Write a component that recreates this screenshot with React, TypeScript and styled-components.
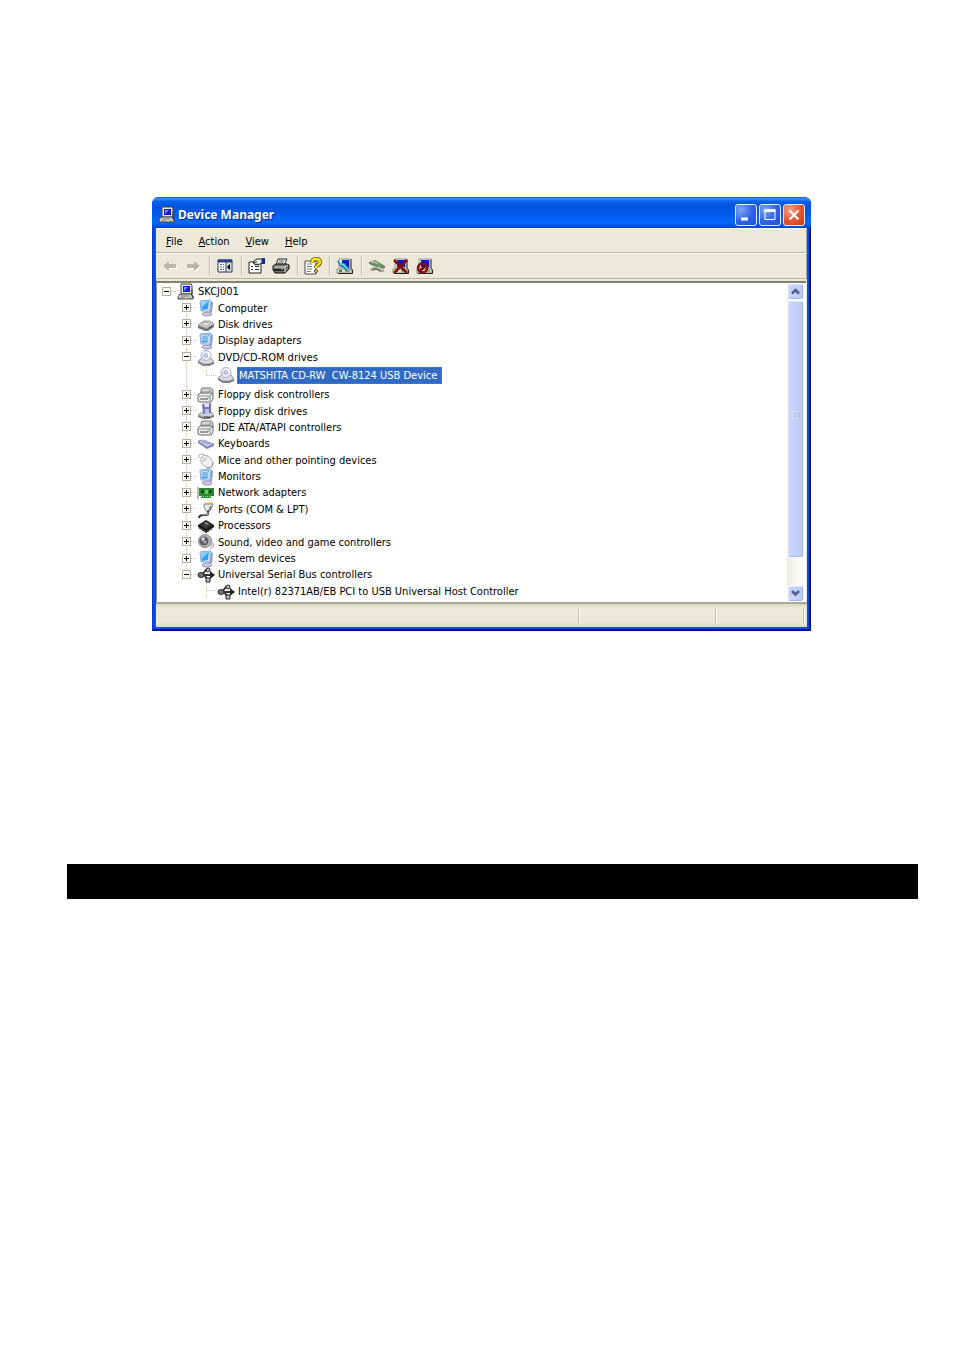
import React from "react";
import styled, { createGlobalStyle, css } from "styled-components";

const GlobalStyle = createGlobalStyle`
  * { box-sizing: border-box; }
  body { margin: 0; background: #fff; }
`;

const uiFont = `"DejaVu Sans Condensed", "Noto Sans", sans-serif`;

const Page = styled.main`
  padding: 197px 36px 0 67px;
  font-family: Tahoma, ${uiFont};
  font-size: 11px;
  line-height: 14px;
  color: #000;
`;

const Window = styled.section`
  margin: 0 107px 0 85px;
  padding: 0 4px 4px;
  border-radius: 7px 7px 0 0;
  background: #0a50e0;
  box-shadow: inset 1px 0 #0a35cf, inset -2px -2px #00138c;
`;

const TitleBar = styled.header`
  display: flex;
  align-items: center;
  gap: 2px;
  height: 31px;
  margin: 0 -4px;
  padding: 4px 6px 0 6px;
  border-radius: 7px 7px 0 0;
  background: linear-gradient(#0a5ae0 0, #3a90fb 2px, #0a62ee 4px, #0055e0 9px, #0058e8 16px, #0566fd 24px, #0566fd 26px, #0044c8 31px);
`;

const Title = styled.h1`
  flex: 1;
  margin: 0;
  font: bold 12px/16px "Trebuchet MS", "Noto Sans", sans-serif;
  color: #fff;
  text-shadow: 1px 1px #0a2a80;
`;

const Captions = styled.div`
  display: flex;
  gap: 2px;
`;

const CaptionButton = styled.button<{ $close?: boolean }>`
  display: grid;
  place-items: center;
  width: 22px;
  height: 22px;
  padding: 0;
  border: 1px solid #e4ecfc;
  border-radius: 3px;
  background: ${(p) =>
    p.$close
      ? "radial-gradient(circle at 30% 25%, #f0a088, #e2552e 55%, #c83a12)"
      : "radial-gradient(circle at 25% 25%, #7da4f4, #2f62e0 55%, #1f4fd0)"};
`;

const bar = css`
  display: flex;
  align-items: center;
  height: 25px;
  background: #ece9d8;
  border: solid;
  border-width: 1px 1px 1px 0;
  border-color: #fff #aca899 #b8b4a2 #fff;
`;

const MenuBar = styled.nav`
  ${bar}
  padding: 2px 0 0 2px;
`;

const MenuButton = styled.button`
  padding: 0 8px;
  border: 0;
  background: none;
  font: inherit;
  color: inherit;
  &::first-letter { text-decoration: underline; }
`;

const ToolBar = styled.div`
  ${bar}
  height: 26px;
  padding-left: 1px;
`;

const ToolButton = styled.button`
  display: grid;
  place-items: center;
  width: 24px;
  height: 22px;
  padding: 0;
  border: 0;
  background: none;
`;

const ToolDivider = styled.span`
  width: 8px;
  height: 20px;
  background: linear-gradient(90deg, transparent 4px, #c5c2b2 4px, #c5c2b2 5px, #f8f6ee 5px, #f8f6ee 6px, transparent 6px);
`;

const Client = styled.div`
  display: flex;
  border-top: 2px solid #ece9d8;
  border-left: 1px solid #918f83;
  border-right: 1px solid #ece9d8;
  padding-right: 2px;
  background: #fff;
  box-shadow: inset 0 2px #85826f;
`;

const Tree = styled.ul`
  flex: 1;
  display: grid;
  grid-template-rows: repeat(5, 1fr) 21px repeat(13, 1fr);
  height: 319px;
  margin: 2px 0 0;
  padding: 0 0 3px;
  overflow: hidden;
  list-style: none;
`;

const TreeRow = styled.li`
  display: flex;
  align-items: stretch;
  min-height: 0;
`;

const dots = "#c9c5b8";
const vertical = (size: string) =>
  `repeating-linear-gradient(${dots} 0 1px, transparent 1px 2px) 9px 0 / 1px ${size} no-repeat`;
const horizontal = `repeating-linear-gradient(90deg, ${dots} 0 1px, transparent 1px 2px) 10px 50% / 10px 1px no-repeat`;

type Line = "none" | "through" | "tee" | "elbow" | "stub";

const lines: Record<Line, string> = {
  none: "none",
  through: vertical("100%"),
  tee: `${vertical("100%")}, ${horizontal}`,
  elbow: `${vertical("50%")}, ${horizontal}`,
  stub: horizontal,
};

const Guide = styled.span<{ $line: Line }>`
  display: flex;
  align-items: center;
  width: 20px;
  padding-left: 5px;
  background: ${(p) => lines[p.$line]};
`;

const Toggle = styled.button<{ $open: boolean }>`
  width: 9px;
  height: 9px;
  padding: 0;
  border: 1px solid #b4b09f;
  background:
    linear-gradient(#000, #000) center / 5px 1px no-repeat,
    linear-gradient(#000, #000) center / 1px ${(p) => (p.$open ? 0 : 5)}px no-repeat,
    #fdfcfa;
`;

const NodeIcon = styled.span`
  display: grid;
  place-items: center;
  width: 20px;
  padding-right: 3px;
`;

const Label = styled.span<{ $selected?: boolean }>`
  align-self: center;
  padding: 2px 1px 0;
  line-height: 14px;
  white-space: pre;
  ${(p) =>
    p.$selected &&
    css`
      padding: 2px 5px 1px 2px;
      outline: 1px dotted #7a7a86;
      outline-offset: -1px;
      background: #316ac5;
      color: #fff;
    `}
`;

const ScrollBar = styled.div`
  display: flex;
  flex-direction: column;
  width: 17px;
  margin-top: 2px;
  background: linear-gradient(90deg, #eeede5, #fefefb);
`;

const scrollFace = css`
  display: grid;
  place-items: center;
  padding: 0;
  border: 1px solid #fff;
  border-radius: 3px;
  background: linear-gradient(90deg, #c9d6fd, #bbcbf8);
  box-shadow: inset -1px -1px #9db6ee, inset 1px 1px #d6e0fc;
`;

const ScrollButton = styled.button`
  ${scrollFace}
  height: 17px;
`;

const Thumb = styled.div`
  ${scrollFace}
  height: 258px;
  margin-bottom: auto;
  padding-bottom: 28px;
`;

const StatusBar = styled.footer`
  display: flex;
  height: 25px;
  padding: 4px 3px 2px 0;
  border-top: 2px solid #aca899;
  background: linear-gradient(#d8d5c2, #ece9d8 4px, #ece9d8 18px, #dedbc8);
`;

const StatusCell = styled.span<{ $width?: number }>`
  flex: ${(p) => (p.$width ? `0 0 ${p.$width}px` : "1")};
  border-right: 1px solid #c5c2b2;
  box-shadow: 1px 0 #fbfaf4;
`;

const SectionBand = styled.div`
  height: 35px;
  margin-top: 233px;
  background: #000;
`;

const Svg = ({ children }: { children: React.ReactNode }) => (
  <svg width="18" height="18" viewBox="0 0 18 18" aria-hidden="true">
    {children}
  </svg>
);

const PcIcon = () => (
  <Svg>
    <path d="M4 1h10l1 1v9H5L4 10z" fill="#e4e4ea" stroke="#444" />
    <path d="M6 3h7v6H6z" fill="#1616d8" />
    <path d="M7 4h4L7 8z" fill="#7c8cff" />
    <path d="M3 11h11l2 3v2H1v-2z" fill="#d4d4cc" stroke="#444" />
    <path d="M4 13h8M3 15h5" stroke="#777" />
    <path d="M15 6v6l2 3" fill="none" stroke="#333" />
    <path d="M12 15h2" stroke="#20a040" />
  </Svg>
);

const Monitor = ({ card }: { card?: boolean }) => (
  <Svg>
    <path d="M13 2l3 1-1 10-3 1z" fill="#8f9bcc" />
    <ellipse cx="10" cy="15" rx="5" ry="2" fill="#c9cbe2" stroke="#9698b8" />
    <path d="M3 2l10-1 1 1-1 10-9 0z" fill="#d5e6fa" stroke="#8ba5d0" />
    <path d="M4 3l8-1-1 8-6 1z" fill="#38a0f4" />
    <path d="M4 3l8-1-7 6z" fill="#82d2ff" />
    {card && <path d="M5 4h6v4H5z" fill="#1878c8" stroke="#d4efff" />}
    {card && <path d="M6 6h4" stroke="#fff" />}
  </Svg>
);

const DriveIcon = () => (
  <Svg>
    <path d="M1 9l6-4h6l4 3v3l-6 4H8l-7-3z" fill="#777" />
    <path d="M1 9l6-4h6l4 3-6 4H8z" fill="#d2d2d2" stroke="#999" />
    <ellipse cx="9" cy="8" rx="4" ry="1.5" fill="#efefef" stroke="#aaa" />
    <path d="M12 12l3-2" stroke="#3e3e3e" />
  </Svg>
);

const DiscIcon = () => (
  <Svg>
    <path d="M1 12l4-3h9l3 4v2l-5 2H6l-5-3z" fill="#77777f" />
    <path d="M1 12l4-3h9l3 4-5 2H6z" fill="#dadae0" stroke="#96969e" />
    <circle cx="9" cy="6.500" r="5" fill="#ebebfa" stroke="#b0b0c8" />
    <path d="M9 6.500L12 2.500 13.500 6z" fill="#fff" />
    <path d="M9 6.500L5 9 4.500 6z" fill="#c8c8f0" />
    <circle cx="9" cy="6.500" r="1.500" fill="#fff" stroke="#8a8ad8" />
  </Svg>
);

const ControllerIcon = () => (
  <Svg>
    <path d="M5 2h9l2 2v4l-2 2H4V4z" fill="#d5d5d5" stroke="#777" />
    <path d="M3 7h11l2 1v5l-2 3H3l-2-1V9z" fill="#f0f0f0" stroke="#666" />
    <path d="M2 10h11v5M13 10l2-2M4 6h9" fill="none" stroke="#888" />
    <path d="M3 13h8" stroke="#444" />
    <path d="M10 12h2" stroke="#32b052" />
    <path d="M12 5h2" stroke="#32b052" />
  </Svg>
);

const FloppyIcon = () => (
  <Svg>
    <path d="M1 13l4-3h9l3 3v2l-5 2H6l-5-2z" fill="#77777f" />
    <path d="M1 13l4-3h9l3 3-5 2H6z" fill="#d2d2d6" stroke="#a0a0a8" />
    <path d="M5 2l9-1v10l-8 1z" fill="#7474b8" />
    <path d="M7 2l5-1v4H8z" fill="#e6e6fa" />
    <path d="M8 7h4v5H8z" fill="#c0c0e4" />
    <path d="M7 15h6" stroke="#444" />
  </Svg>
);

const KeyboardIcon = () => (
  <Svg>
    <path d="M1 6l4-1 12 4v2l-7 3-9-6z" fill="#7e7eb4" />
    <path d="M1 6l5-1 11 4-7 3z" fill="#d8d8f4" stroke="#9898ca" />
    <path d="M4 6.500l8 3.500M6 6l8 3.500M6 8l4-2M9 9.500l4-2" stroke="#a5a5d6" />
  </Svg>
);

const MouseIcon = () => (
  <Svg>
    <path d="M2 6q-1-4 3-4l3 1" fill="none" stroke="#aaa" />
    <path d="M4 6q2-4 7-2 5 3 5 7 0 5-5 5-5-1-7-6z" fill="#efefef" stroke="#b4b4b4" />
    <path d="M5 9q4 0 5-6M5 5l4 3" fill="none" stroke="#bbb" />
    <path d="M16 11q0 5-6 5" fill="none" stroke="#888" />
  </Svg>
);

const NetworkIcon = () => (
  <Svg>
    <path d="M2 4h15v8h-3v2H4v-2H2z" fill="#2c8a30" />
    <path d="M1 3v12" stroke="#777" />
    <path d="M4 6h3v3H4zM12 6h3v3h-3z" fill="#0f4c18" />
    <path d="M8 6h3v4H8z" fill="#72c862" />
    <path d="M4 12.500h10" stroke="#dcc246" strokeDasharray="1 1" />
  </Svg>
);

const PortIcon = () => (
  <Svg>
    <path d="M8 1h8v2H8z" fill="#f0ec70" />
    <path d="M7 3h9l-1 3-2 4H9L7 6z" fill="#e9e9e9" stroke="#888" />
    <path d="M14 5l-2 5" stroke="#888" strokeWidth="2" />
    <path d="M11 10v3q0 1-4 1-5 0-5 3" fill="none" stroke="#333" strokeWidth="2" />
    <path d="M11 11v2q-2 1-6 1" fill="none" stroke="#aaa" />
  </Svg>
);

const ChipIcon = () => (
  <Svg>
    <path d="M1 8l8-5 8 5v2l-8 6-8-6z" fill="#161616" />
    <path d="M3 8l6-4 6 4-6 4z" fill="#3a3a3a" />
    <path d="M7 6l2-1 3 2-2 1z" fill="#888" />
    <path d="M2 11l7 4 7-4" fill="none" stroke="#555" strokeWidth="2" strokeDasharray="1 1" />
  </Svg>
);

const SoundIcon = () => (
  <Svg>
    <circle cx="8" cy="8" r="6.500" fill="#b4b4b8" stroke="#888" />
    <circle cx="7" cy="8" r="4.500" fill="#5a5a60" />
    <path d="M4 6q2-3 4-1L6 9z" fill="#ddd" />
    <circle cx="8" cy="9" r="1.500" fill="#aaa" />
    <path d="M15 9q1 3-2 5M17 10q1 4-4 6" fill="none" stroke="#9b9be4" />
  </Svg>
);

const UsbIcon = () => (
  <Svg>
    <path d="M3 9h12M5 9l4-5h2M7 9l4 5h2" fill="none" stroke="#333" strokeWidth="2" />
    <ellipse cx="4" cy="9" rx="3" ry="2.500" fill="#777" stroke="#222" />
    <path d="M13 5l5 4-5 4z" fill="#222" />
    <circle cx="11" cy="4" r="2" fill="#bbb" stroke="#222" />
    <path d="M9 12h4v4H9z" fill="#bbb" stroke="#222" />
  </Svg>
);

const Arrow = ({ back }: { back?: boolean }) => {
  const shape = back ? "M3 9l6-5v3h7v4H9v3z" : "M16 9l-6-5v3H3v4h7v3z";
  return (
    <Svg>
      <path d={shape} fill="#fff" transform="translate(1 1)" />
      <path d={shape} fill="#b9b6a8" />
    </Svg>
  );
};

const PaneIcon = () => (
  <Svg>
    <path d="M2 3h14v12H2z" fill="#fff" stroke="#203070" />
    <path d="M2 4h14" stroke="#2a3c88" strokeWidth="3" />
    <path d="M10 5v10" stroke="#203070" />
    <path d="M4 7.500h4M4 10h4M4 12.500h4" stroke="#5a5a78" strokeDasharray="2 1" />
    <path d="M11 6h4v8h-4z" fill="#d6d3c3" />
    <path d="M14 7v6l-3-3z" fill="#000" />
  </Svg>
);

const PropertiesIcon = () => (
  <Svg>
    <path d="M1 5h12v11H1z" fill="#fff" stroke="#222" />
    <path d="M3 9.500h2M7 9.500h4M3 12.500h2M7 12.500h4" stroke="#333" />
    <path d="M6 4l3-2h5v4l-4 2-4-1z" fill="#eee" stroke="#222" />
    <path d="M5 6l4-1M7 8l3-1" stroke="#333" />
    <path d="M14 1h3v6h-3z" fill="#1c2b92" />
  </Svg>
);

const PrinterIcon = () => (
  <Svg>
    <path d="M6 2h9l-3 6H4z" fill="#fff" stroke="#222" />
    <path d="M7 4h5M6 6h5" stroke="#555" />
    <path d="M1 9l3-2h11l2 1v4l-4 4H3l-2-3z" fill="#777" stroke="#111" />
    <path d="M2 10h11l3-2M13 10v5" fill="none" stroke="#ddd" />
    <path d="M2 13h10" stroke="#222" strokeWidth="2" />
    <path d="M9 12h2" stroke="#e4d32c" />
  </Svg>
);

const HelpIcon = () => (
  <Svg>
    <path d="M1 4h11v13H1z" fill="#fff" stroke="#444" />
    <path d="M3 7h5M3 9.500h5M3 12h5M3 14.500h4" stroke="#777" />
    <path d="M8 6q0-4 4-4t4 3q0 2-2 3t-2 3" fill="none" stroke="#5c5200" strokeWidth="4" />
    <path d="M8 6q0-4 4-4t4 3q0 2-2 3t-2 3" fill="none" stroke="#ffe614" strokeWidth="2.500" />
    <circle cx="12" cy="14" r="1.500" fill="#ffe614" stroke="#5c5200" />
  </Svg>
);

const BasePc = () => (
  <>
    <path d="M3 2h11v9H3z" fill="#e2e0d2" stroke="#999" />
    <path d="M5 3h8v7H5z" fill="#1018d0" />
    <path d="M1 12h13l2 2v2H1z" fill="#e4e2d5" stroke="#888" />
    <path d="M2 16.500h14.500V13L15 11V2" fill="none" stroke="#222" />
    <path d="M3 14h3" stroke="#18a030" strokeWidth="2" />
    <path d="M9 14h5" stroke="#555" />
  </>
);

const ScanIcon = () => (
  <Svg>
    <BasePc />
    <path d="M3 3l2 4 3 1 4 5" fill="none" stroke="#126c94" strokeWidth="4" />
    <path d="M3 3l2 4 3 1 4 5" fill="none" stroke="#68d8f4" strokeWidth="2" />
    <path d="M4 2v3l2 1V3z" fill="#fff" />
  </Svg>
);

const UpdateIcon = () => (
  <Svg>
    <path d="M1 5l6-2 10 6v2l-4 1L1 7z" fill="#777d6a" />
    <path d="M2 5l5-1 8 4-4 2z" fill="#5ea05c" />
    <path d="M3 5h4l3 2" fill="none" stroke="#d8e4d0" />
    <path d="M2 12l4-2 10 2v3h-4l-3-2-6 1z" fill="#aaa899" />
    <path d="M4 12h5l4 2" fill="none" stroke="#555" />
    <path d="M10 10l5 3" stroke="#eee" />
  </Svg>
);

const UninstallIcon = () => (
  <Svg>
    <BasePc />
    <path d="M2 3l13 13M15 3L2 16" stroke="#850c0c" strokeWidth="2.500" />
  </Svg>
);

const DisableIcon = () => (
  <Svg>
    <BasePc />
    <circle cx="6.500" cy="11" r="4.500" fill="none" stroke="#850c0c" strokeWidth="2.500" />
    <path d="M4 14l6-6" stroke="#850c0c" strokeWidth="2.500" />
  </Svg>
);

const tools: { name: string; icon: React.ReactNode }[][] = [
  [
    { name: "Back", icon: <Arrow back /> },
    { name: "Forward", icon: <Arrow /> },
  ],
  [{ name: "Show or hide console tree", icon: <PaneIcon /> }],
  [
    { name: "Properties", icon: <PropertiesIcon /> },
    { name: "Print", icon: <PrinterIcon /> },
  ],
  [{ name: "Help topics", icon: <HelpIcon /> }],
  [{ name: "Scan for hardware changes", icon: <ScanIcon /> }],
  [
    { name: "Update driver", icon: <UpdateIcon /> },
    { name: "Uninstall", icon: <UninstallIcon /> },
    { name: "Disable", icon: <DisableIcon /> },
  ],
];

type Node = { label: string; icon: React.ReactNode; guides: Line[]; open?: boolean; selected?: boolean };

const category = (label: string, icon: React.ReactNode, open = false): Node => ({
  label,
  icon,
  open,
  guides: ["none", "tee"],
});

const nodes: Node[] = [
  { label: "SKCJ001", icon: <PcIcon />, guides: ["stub"], open: true },
  category("Computer", <Monitor />),
  category("Disk drives", <DriveIcon />),
  category("Display adapters", <Monitor card />),
  category("DVD/CD-ROM drives", <DiscIcon />, true),
  {
    label: "MATSHITA CD-RW  CW-8124 USB Device",
    icon: <DiscIcon />,
    guides: ["none", "through", "elbow"],
    selected: true,
  },
  category("Floppy disk controllers", <ControllerIcon />),
  category("Floppy disk drives", <FloppyIcon />),
  category("IDE ATA/ATAPI controllers", <ControllerIcon />),
  category("Keyboards", <KeyboardIcon />),
  category("Mice and other pointing devices", <MouseIcon />),
  category("Monitors", <Monitor card />),
  category("Network adapters", <NetworkIcon />),
  category("Ports (COM & LPT)", <PortIcon />),
  category("Processors", <ChipIcon />),
  category("Sound, video and game controllers", <SoundIcon />),
  category("System devices", <Monitor />),
  { label: "Universal Serial Bus controllers", icon: <UsbIcon />, guides: ["none", "elbow"], open: true },
  {
    label: "Intel(r) 82371AB/EB PCI to USB Universal Host Controller",
    icon: <UsbIcon />,
    guides: ["none", "none", "tee"],
  },
];

const DeviceNode = ({ node }: { node: Node }) => (
  <TreeRow role="treeitem" aria-level={node.guides.length} aria-selected={!!node.selected} aria-expanded={node.open}>
    {node.guides.map((line, i) => (
      <Guide key={i} $line={line}>
        {i === node.guides.length - 1 && node.open !== undefined && (
          <Toggle $open={node.open} aria-label={`${node.open ? "Collapse" : "Expand"} ${node.label}`} />
        )}
      </Guide>
    ))}
    <NodeIcon>{node.icon}</NodeIcon>
    <Label $selected={node.selected}>{node.label}</Label>
  </TreeRow>
);

const Chevron = ({ down }: { down?: boolean }) => (
  <svg width="9" height="7" viewBox="0 0 9 7" aria-hidden="true">
    <path d={down ? "M1 1l3.500 3.500L8 1" : "M1 5.500L4.500 2 8 5.500"} fill="none" stroke="#4d6185" strokeWidth="2.500" />
  </svg>
);

export default function App() {
  return (
    <Page>
      <GlobalStyle />
      <Window>
        <TitleBar>
          <PcIcon />
          <Title>Device Manager</Title>
          <Captions>
            <CaptionButton aria-label="Minimize">
              <Svg>
                <path d="M4 13h7" stroke="#fff" strokeWidth="3" />
              </Svg>
            </CaptionButton>
            <CaptionButton aria-label="Maximize">
              <Svg>
                <path d="M4 4.500h10v9H4z" fill="none" stroke="#fff" />
                <path d="M3.500 4.500h11" stroke="#fff" strokeWidth="3" />
              </Svg>
            </CaptionButton>
            <CaptionButton $close aria-label="Close">
              <Svg>
                <path d="M4.500 4.500l9 9M13.500 4.500l-9 9" stroke="#fff" strokeWidth="2" />
              </Svg>
            </CaptionButton>
          </Captions>
        </TitleBar>
        <MenuBar aria-label="Menu">
          {["File", "Action", "View", "Help"].map((name) => (
            <MenuButton key={name}>{name}</MenuButton>
          ))}
        </MenuBar>
        <ToolBar role="toolbar" aria-label="Standard buttons">
          {tools.map((group, i) => (
            <React.Fragment key={i}>
              {i > 0 && <ToolDivider />}
              {group.map((tool) => (
                <ToolButton key={tool.name} aria-label={tool.name}>
                  {tool.icon}
                </ToolButton>
              ))}
            </React.Fragment>
          ))}
        </ToolBar>
        <Client>
          <Tree role="tree" aria-label="Devices">
            {nodes.map((node) => (
              <DeviceNode key={node.label} node={node} />
            ))}
          </Tree>
          <ScrollBar>
            <ScrollButton aria-label="Scroll up">
              <Chevron />
            </ScrollButton>
            <Thumb>
              <svg width="8" height="8" viewBox="0 0 8 8" aria-hidden="true">
                <path d="M0 1h7M0 3h7M0 5h7M0 7h7" stroke="#e8effe" />
                <path d="M1 2h7M1 4h7M1 6h7" stroke="#9fb6ee" />
              </svg>
            </Thumb>
            <ScrollButton aria-label="Scroll down">
              <Chevron down />
            </ScrollButton>
          </ScrollBar>
        </Client>
        <StatusBar>
          <StatusCell />
          <StatusCell $width={137} />
          <StatusCell $width={88} />
        </StatusBar>
      </Window>
      <SectionBand />
    </Page>
  );
}
